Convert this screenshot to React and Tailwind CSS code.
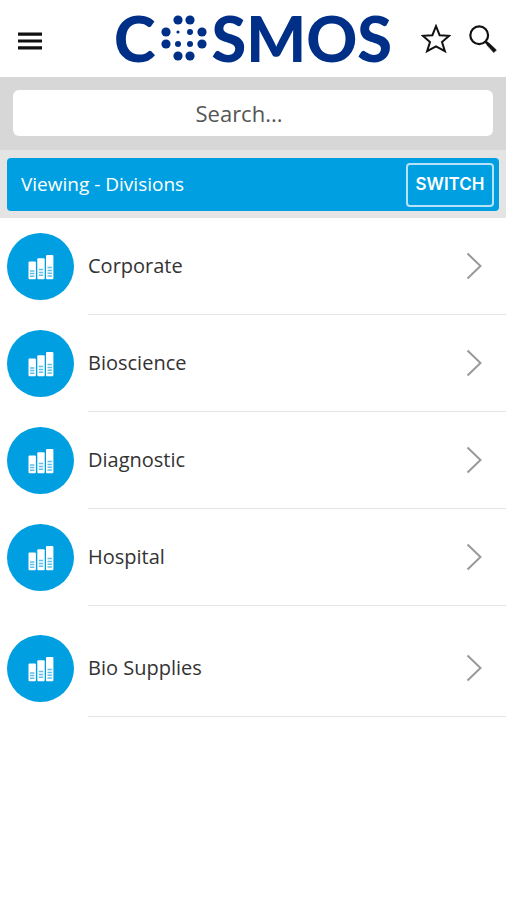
import React from 'react';

const divisions = [
  { name: 'Corporate' },
  { name: 'Bioscience' },
  { name: 'Diagnostic' },
  { name: 'Hospital' },
  { name: 'Bio Supplies', spaced: true },
];

const logoDots = [
  [18, 5, 4.6],
  [30, 5, 4.6],
  [6, 17, 4.6],
  [18, 17, 1.6],
  [30, 17, 3],
  [42, 17, 4.6],
  [6, 29, 4.6],
  [18, 29, 3],
  [30, 29, 3],
  [42, 29, 4.6],
  [18, 41, 4.6],
  [30, 41, 4.6],
];

const Logo = () => (
  <h1
    aria-label="Cosmos"
    className="flex items-center pb-0.5 font-['Lato',sans-serif] text-[63px] leading-[63px] font-black text-[#002f87]"
  >
    <span>C</span>
    <svg viewBox="0 0 48 46" className="mx-1 h-[46px] w-12" fill="currentColor">
      {logoDots.map(([cx, cy, r]) => (
        <circle key={`${cx}-${cy}`} cx={cx} cy={cy} r={r} />
      ))}
    </svg>
    <span>SMOS</span>
  </h1>
);

const MenuIcon = () => (
  <svg viewBox="0 0 24 18" className="h-[18px] w-6" stroke="#111" strokeWidth="3.2">
    <path d="M0 2.2h24M0 9h24M0 15.8h24" />
  </svg>
);

const StarIcon = () => (
  <svg viewBox="0 0 30 30" className="h-[30px] w-[30px]" fill="none" stroke="#111" strokeWidth="2">
    <path d="M15 2.2L18.6 11.2L28.2 11.8L21 18L23.9 27.2L15 22.4L6.1 27.2L9 18L1.8 11.8L11.4 11.2Z" />
  </svg>
);

const SearchIcon = () => (
  <svg viewBox="0 0 28 28" className="h-7 w-7" fill="none" stroke="#111">
    <circle cx="10.2" cy="10.2" r="8.9" strokeWidth="2.2" />
    <path d="M16.3 16.3L19.5 19.5" strokeWidth="2.6" />
    <path d="M17.6 17.6L20.2 18.2L27.4 25L24.8 27.6L18.4 20.6Z" fill="#111" strokeWidth="0.6" />
  </svg>
);

const BindersIcon = () => (
  <svg viewBox="0 0 26 26" className="h-[26px] w-[26px]">
    <g fill="#fff">
      <rect x="0.5" y="7.4" width="7.4" height="17.8" rx="1" />
      <rect x="9.3" y="4.2" width="7.4" height="21" rx="1" />
      <rect x="18" y="1" width="7.4" height="24.2" rx="1" />
    </g>
    <g stroke="#5fc0ea" strokeWidth="1.5">
      <path d="M2 17h4.4M2 19.6h4.4M2 22.2h4.4" />
      <path d="M10.8 15.6h4.4M10.8 18.4h4.4M10.8 21.2h4.4" />
      <path d="M19.5 13.6h4.4M19.5 16.4h4.4M19.5 19.2h4.4M19.5 22h4.4" />
    </g>
  </svg>
);

const ChevronIcon = () => (
  <svg viewBox="0 0 16 28" className="h-7 w-4" fill="none" stroke="#999" strokeWidth="2">
    <path d="M1.5 1.5L14.5 14L1.5 26.5" />
  </svg>
);

const DivisionRow = ({ name, spaced }) => (
  <li className={spaced ? 'pt-[14px]' : ''}>
    <a href="#" className="flex h-[97px] items-stretch pl-[7px]">
      <span className="flex h-[67px] w-[67px] shrink-0 items-center justify-center self-center rounded-full bg-[#009fe1]">
        <BindersIcon />
      </span>
      <span className="ml-[14px] flex flex-1 items-center justify-between border-b border-[#e4e4e4] pr-6 text-xl text-[#333]">
        {name}
        <ChevronIcon />
      </span>
    </a>
  </li>
);

const App = () => {
  return (
    <div className="min-h-screen bg-white font-['Open_Sans',sans-serif]">
      <header className="grid h-[77px] grid-cols-[1fr_auto_1fr] items-center px-[9px]">
        <button aria-label="Menu" className="mt-1 justify-self-start pl-[9px]">
          <MenuIcon />
        </button>
        <Logo />
        <div className="flex items-center gap-[18px] justify-self-end">
          <button aria-label="Favourites">
            <StarIcon />
          </button>
          <button aria-label="Search">
            <SearchIcon />
          </button>
        </div>
      </header>

      <div className="bg-[#d7d7d7] px-[13px] pt-[13px] pb-[14px]">
        <input
          type="text"
          aria-label="Search"
          placeholder="Search..."
          className="block h-[46px] w-full rounded-md bg-white pr-7 text-center text-[22px] text-[#555] placeholder:text-[#555]"
        />
      </div>

      <div className="bg-[#e4e4e4] px-[7px] pt-2 pb-[7px]">
        <div className="flex h-[53px] items-center justify-between rounded-sm bg-[#009fe1] pr-[5px] pl-[14px]">
          <span className="text-[19px] text-white">Viewing - Divisions</span>
          <button className="h-11 w-[88px] rounded-sm border-2 border-[#b5e3f8] font-['Inter',sans-serif] text-[17px] font-semibold text-white">
            SWITCH
          </button>
        </div>
      </div>

      <ul>
        {divisions.map((division) => (
          <DivisionRow key={division.name} {...division} />
        ))}
      </ul>
    </div>
  );
};

export default App;
